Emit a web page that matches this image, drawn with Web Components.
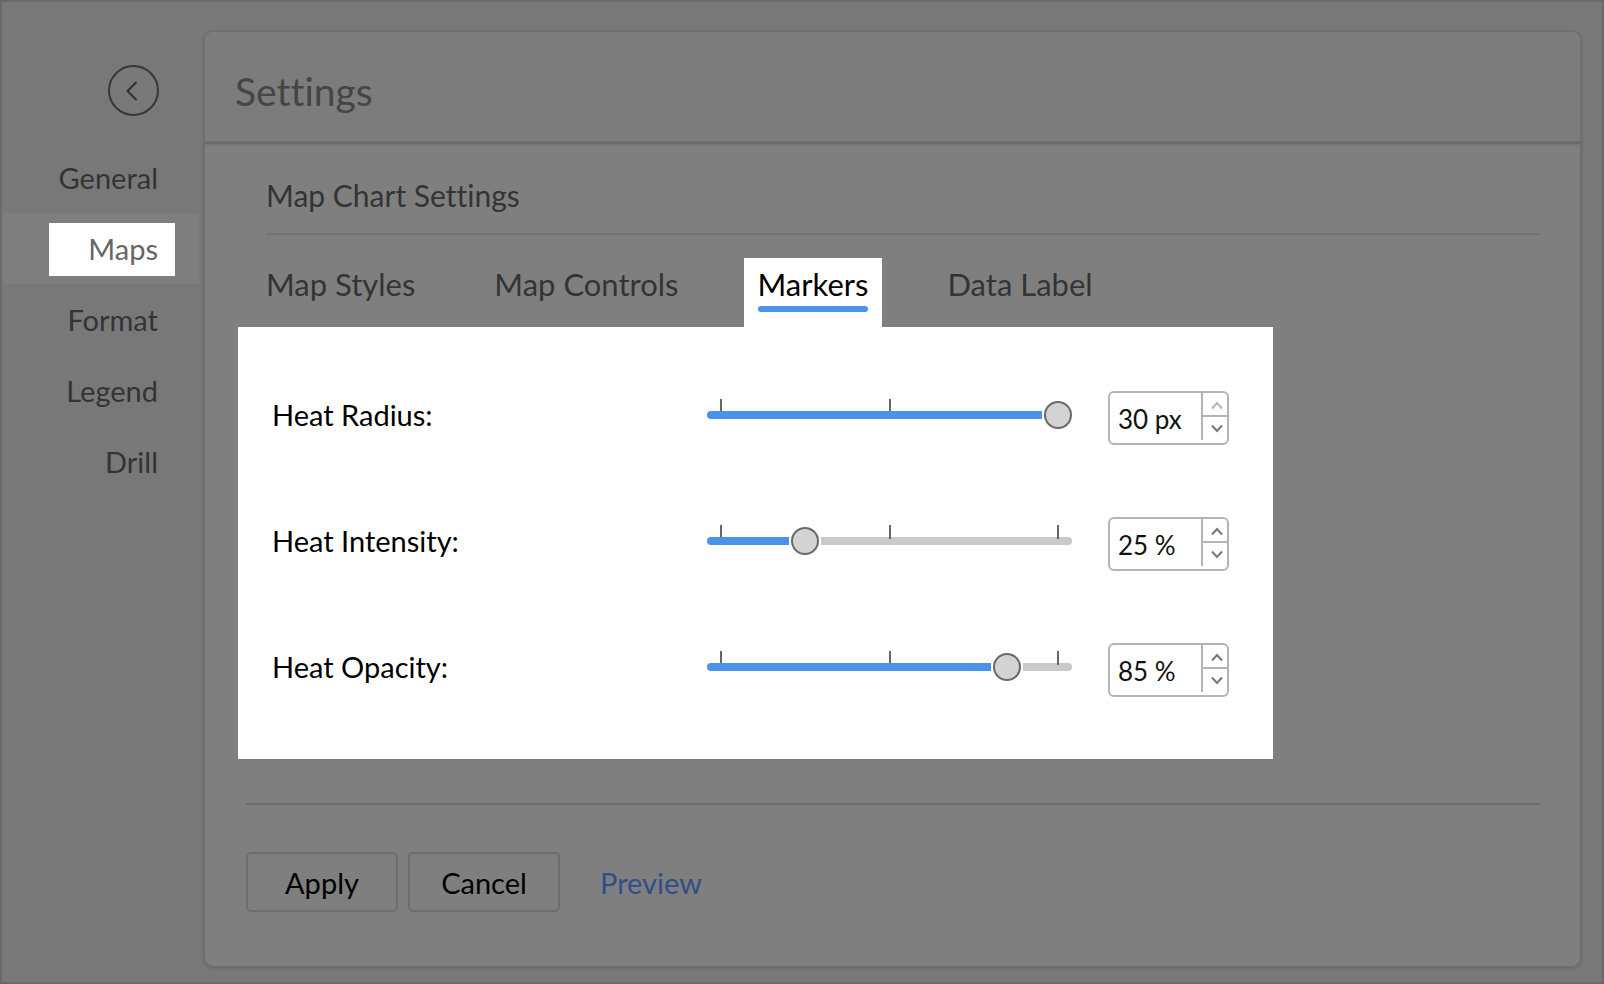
<!DOCTYPE html>
<html lang="en">
<head>
<meta charset="utf-8">
<meta name="viewport" content="width=device-width, initial-scale=1">
<title>Settings</title>
<style>
  body { margin: 0; font-family: Lato, "Open Sans", sans-serif; font-size: 29px; line-height: 36px; font-variant-ligatures: none; color: #343434; background: #787878; }
</style>
</head>
<body>
<app-shell>
  <side-nav slot="nav">
    <nav-item href="#general">General</nav-item>
    <nav-item href="#maps" current>Maps</nav-item>
    <nav-item href="#format">Format</nav-item>
    <nav-item href="#legend">Legend</nav-item>
    <nav-item href="#drill">Drill</nav-item>
  </side-nav>
  <settings-card heading="Settings">
    <section-title>Map Chart Settings</section-title>
    <tab-bar>
      <tab-item>Map Styles</tab-item>
      <tab-item>Map Controls</tab-item>
      <tab-item selected>Markers</tab-item>
      <tab-item>Data Label</tab-item>
    </tab-bar>
    <setting-group>
      <range-setting label="Heat Radius:" max="30" value="30" unit="px"></range-setting>
      <range-setting label="Heat Intensity:" max="100" value="25" unit="%"></range-setting>
      <range-setting label="Heat Opacity:" max="100" value="85" unit="%"></range-setting>
    </setting-group>
    <action-bar>
      <action-button>Apply</action-button>
      <action-button>Cancel</action-button>
      <action-link href="#preview">Preview</action-link>
    </action-bar>
  </settings-card>
</app-shell>

<script>
const define = (name, html, setup) => {
  const template = document.createElement('template');
  template.innerHTML = html;
  customElements.define(name, class extends HTMLElement {
    connectedCallback() {
      if (this.shadowRoot) return;
      const root = this.attachShadow({ mode: 'open' });
      root.append(template.content.cloneNode(true));
      if (setup) setup(this, root);
    }
  });
};

define('app-shell', `
  <style>
    :host { display: grid; grid-template-columns: 202px minmax(0, 1fr); box-sizing: border-box; min-height: 100vh; border: 2px solid #6a6a6a; padding-right: 21px; background: #787878; }
    main { display: flex; padding: 29px 0 15px; }
    ::slotted(settings-card) { flex: 1; }
  </style>
  <slot name="nav"></slot>
  <main><slot></slot></main>`);

define('side-nav', `
  <style>
    :host { display: block; padding-top: 63px; }
    button { display: grid; place-items: center; box-sizing: border-box; width: 51px; height: 51px; margin: 0 45px 26px auto; padding: 0 3px 0 0; border: 2px solid #373737; border-radius: 50%; background: none; }
    nav { display: flex; flex-direction: column; }
  </style>
  <button type="button" aria-label="Back">
    <svg width="12" height="20" viewBox="0 0 12 20" fill="none" stroke="#303030" stroke-width="2" stroke-linecap="round" stroke-linejoin="round"><path d="M10 1.5 1.5 10 10 18.5"/></svg>
  </button>
  <nav aria-label="Settings sections"><slot></slot></nav>`);

define('nav-item', `
  <style>
    :host { display: flex; justify-content: flex-end; align-items: center; box-sizing: border-box; height: 71px; margin-right: 5px; padding-top: 2px; }
    :host([current]) { background: #7e7e7e; }
    a { box-sizing: border-box; width: 126px; margin-right: 24px; padding: 8px 17px 9px 0; text-align: right; color: inherit; text-decoration: none; }
    :host([current]) a { background: #fff; color: #666; }
  </style>
  <a><slot></slot></a>`, (host, root) => {
  const a = root.querySelector('a');
  a.href = host.getAttribute('href');
  if (host.hasAttribute('current')) a.setAttribute('aria-current', 'page');
});

define('settings-card', `
  <style>
    :host { display: flex; flex-direction: column; border: 1px solid #6d6d6d; border-radius: 9px; background: #7f7f7f; box-shadow: 0 1px 3px 1px #6b6b6b; }
    header { padding: 36px 30px 27px; border-bottom: 3px solid #6c6c6c; border-radius: 8px 8px 0 0; background: #7c7c7c; box-shadow: 0 1px 2px #747474; }
    h1 { margin: 0; font-size: 39px; line-height: 46px; font-weight: 400; color: #454545; }
  </style>
  <header><h1></h1></header>
  <slot></slot>`, (host, root) => {
  root.querySelector('h1').textContent = host.getAttribute('heading');
});

define('section-title', `
  <style>
    :host { display: block; margin: 0 40px 0 61px; padding: 33px 0 20px; border-bottom: 2px solid #747474; }
    h2 { margin: 0; font: inherit; font-size: 30px; }
  </style>
  <h2><slot></slot></h2>`);

define('tab-bar', `
  <style>
    :host { display: flex; gap: 51px; margin: 23px 40px 0 47px; }
  </style>
  <slot></slot>`, host => host.setAttribute('role', 'tablist'));

define('tab-item', `
  <style>
    :host { display: block; }
    button { display: block; padding: 8px 14px 15px; border: 0; background: none; font: inherit; font-size: 31px; color: inherit; white-space: nowrap; }
    span { display: block; padding-bottom: 4px; }
    button::after { content: ""; display: block; height: 6px; border-radius: 3px; }
    :host([selected]) button { background: #fff; color: #000; }
    :host([selected]) button::after { background: #4a92ea; }
  </style>
  <button type="button" role="tab"><span><slot></slot></span></button>`, (host, root) => {
  root.querySelector('button').setAttribute('aria-selected', host.hasAttribute('selected'));
});

define('setting-group', `
  <style>
    :host { display: grid; row-gap: 72px; margin: 0 307px 0 33px; padding: 64px 44px 62px 34px; background: #fff; color: #000; }
  </style>
  <slot></slot>`);

define('range-setting', `
  <style>
    :host { display: grid; grid-template-columns: minmax(0, 1fr) 365px 121px; column-gap: 36px; align-items: center; height: 54px; }
    label { padding-bottom: 6px; }
    .range { appearance: none; -webkit-appearance: none; width: 100%; height: 32px; margin: 0 0 6px;
      --tick: linear-gradient(#666, #666);
      background: var(--tick) 13px 0 / 2px 12px no-repeat, var(--tick) 50% 0 / 2px 12px no-repeat, var(--tick) calc(100% - 13px) 0 / 2px var(--end, 12px) no-repeat; }
    .range::-webkit-slider-runnable-track { height: 8px; border-radius: 4px;
      --at: calc(14px + (100% - 28px) * var(--ratio));
      background:
        linear-gradient(90deg, #4a92ea calc(var(--at) - 16px), #fff calc(var(--at) - 16px) calc(var(--at) + 16px), transparent calc(var(--at) + 16px)),
        var(--tick) 50% 0 / 2px 2px no-repeat, var(--tick) calc(100% - 13px) 0 / 2px 2px no-repeat, #c9c9c9; }
    .range::-webkit-slider-thumb { -webkit-appearance: none; box-sizing: border-box; width: 28px; height: 28px; margin-top: -10px; border: 2px solid #6a6a6a; border-radius: 50%; background: #d3d3d3; }
    .stepper { display: grid; grid-template-columns: minmax(0, 1fr) 26px; box-sizing: border-box; height: 54px; border: 2px solid #b4b4b4; border-radius: 6px; background: #fff; }
    .stepper input { box-sizing: border-box; width: 100%; min-width: 0; margin: 0; padding: 2px 0 0 8px; border: 0; background: none; font: inherit; font-size: 26px; color: #111; outline: 0; }
    .steps { display: grid; grid-template-rows: 24px 23px; height: 47px; border-left: 2px solid #b4b4b4; }
    button { display: grid; place-items: center; padding: 0 0 0 4px; border: 0; background: none; color: #777; }
    button:first-child { border-bottom: 2px solid #b4b4b4; padding-top: 3px; }
    button:disabled { color: #b4b4b4; }
  </style>
  <label for="range"></label>
  <input class="range" id="range" type="range" min="0">
  <div class="stepper">
    <input type="text">
    <div class="steps">
      <button type="button" aria-label="Increase"><svg width="12" height="9" viewBox="0 0 12 9" fill="none" stroke="currentColor" stroke-width="2"><path d="m1 7.5 5-5.5 5 5.5"/></svg></button>
      <button type="button" aria-label="Decrease"><svg width="12" height="9" viewBox="0 0 12 9" fill="none" stroke="currentColor" stroke-width="2"><path d="m1 1.5 5 5.5 5-5.5"/></svg></button>
    </div>
  </div>`, (host, root) => {
  const range = root.querySelector('.range');
  const text = root.querySelector('.stepper input');
  const [up, down] = root.querySelectorAll('button');
  const label = host.getAttribute('label');
  root.querySelector('label').textContent = label;
  text.setAttribute('aria-label', label.replace(':', ' value'));
  range.max = host.getAttribute('max');
  range.value = host.getAttribute('value');
  const sync = () => {
    const ratio = range.value / range.max;
    range.style.setProperty('--ratio', ratio);
    range.style.setProperty('--end', ratio === 1 ? '0px' : '12px');
    text.value = range.value + ' ' + host.getAttribute('unit');
    up.disabled = ratio === 1;
    down.disabled = ratio === 0;
  };
  range.addEventListener('input', sync);
  up.addEventListener('click', () => { range.stepUp(); sync(); });
  down.addEventListener('click', () => { range.stepDown(); sync(); });
  text.addEventListener('change', () => { range.value = parseInt(text.value) || 0; sync(); });
  sync();
});

define('action-bar', `
  <style>
    :host { display: flex; align-items: center; gap: 10px; margin: 44px 40px 0 41px; padding: 47px 0 53px; border-top: 2px solid #6e6e6e; }
  </style>
  <slot></slot>`);

define('action-button', `
  <style>
    :host { display: block; }
    button { box-sizing: border-box; width: 152px; height: 60px; padding: 2px 0 0; border: 2px solid #6e6e6e; border-radius: 5px; background: none; font: inherit; color: #000; }
  </style>
  <button type="button"><slot></slot></button>`);

define('action-link', `
  <style>
    :host { display: block; margin-left: 30px; padding-top: 2px; }
    a { color: #304f88; text-decoration: none; }
  </style>
  <a><slot></slot></a>`, (host, root) => {
  root.querySelector('a').href = host.getAttribute('href');
});
</script>
</body>
</html>
